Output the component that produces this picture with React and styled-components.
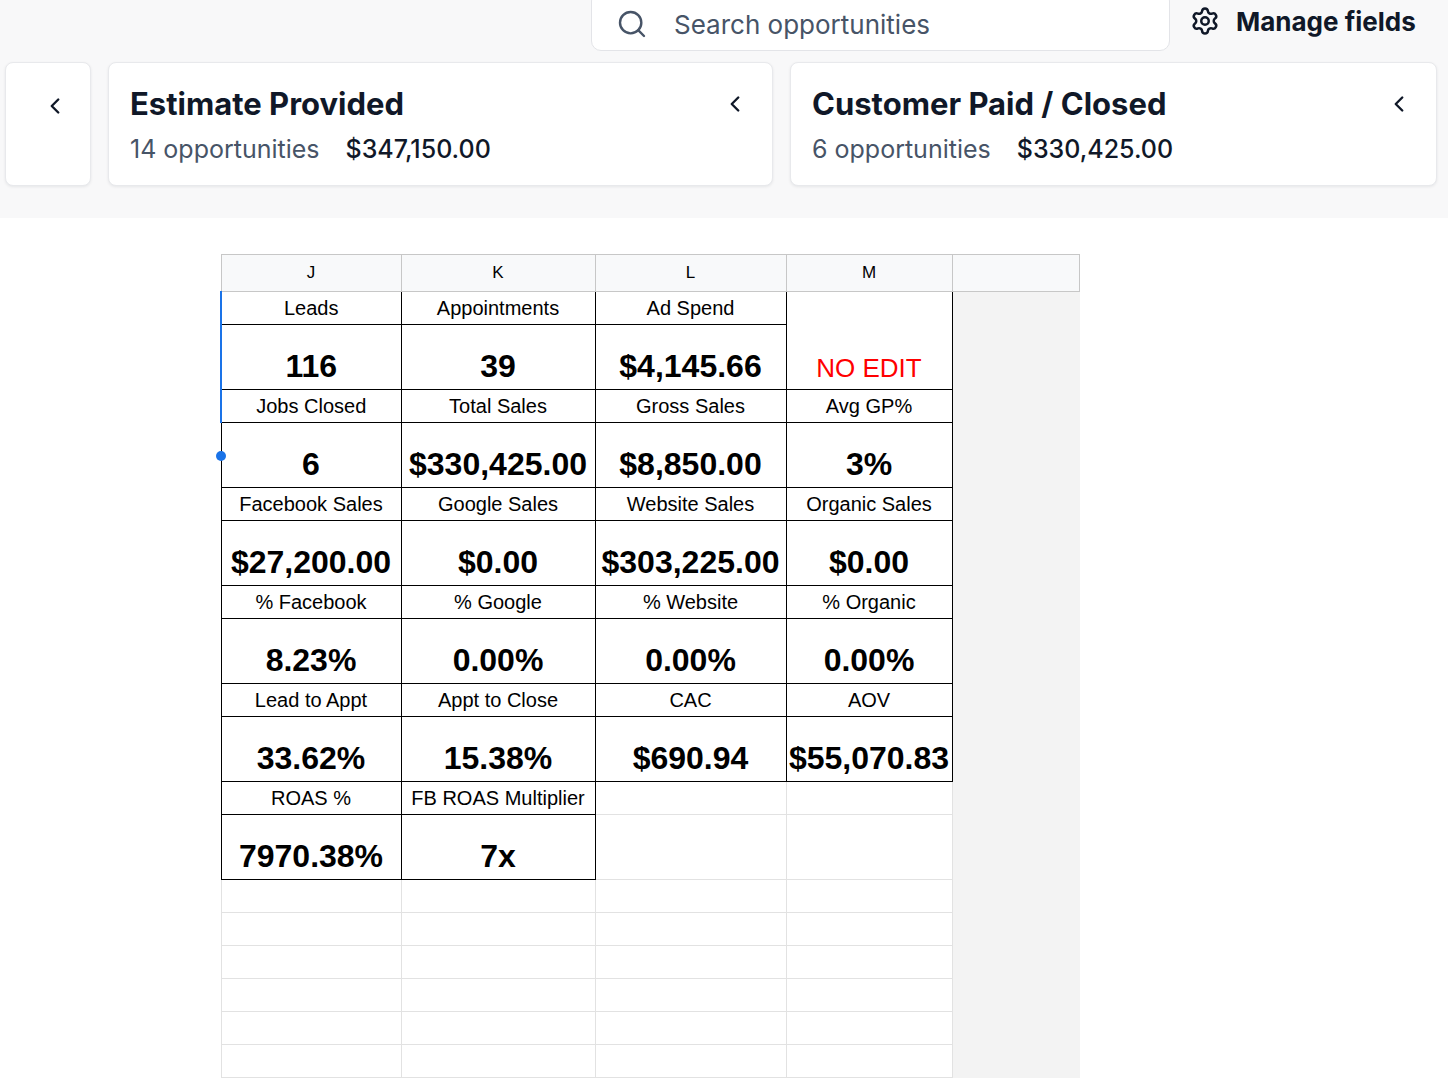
import React from 'react';
import styled, { createGlobalStyle } from 'styled-components';
import { Search, Settings, ChevronLeft } from 'lucide-react';

const Global = createGlobalStyle`
  body { margin: 0; background: #fff; font-family: Inter, "Noto Sans", sans-serif; }
`;

const Top = styled.div`
  background: #f8f8f9;
  height: 218px;
  box-sizing: border-box;
  overflow: hidden;
`;
const Toolbar = styled.div`
  display: flex;
  align-items: center;
  height: 54px;
  margin-top: -6px;
  padding-left: 591px;
  gap: 20px;
`;
const SearchBox = styled.div`
  width: 579px;
  height: 60px;
  box-sizing: border-box;
  border: 1px solid #e3e4e8;
  border-radius: 10px;
  background: #fff;
  display: flex;
  align-items: center;
  gap: 26px;
  padding: 6px 0 0 24px;
  color: #667085;
  font-size: 26px;
  color: #475467;
`;
const Manage = styled.div`
  display: flex;
  align-items: center;
  gap: 16px;
  font-size: 26px;
  font-weight: 700;
  color: #101828;
`;
const Cards = styled.div`
  display: flex;
  gap: 17px;
  padding: 14px 11px 0 5px;
`;
const Card = styled.div`
  width: ${p => p.w}px;
  height: 124px;
  box-sizing: border-box;
  background: #fff;
  border: 1px solid #e8e9ec;
  border-radius: 8px;
  box-shadow: 0 1px 3px rgba(16,24,40,0.08);
  display: flex;
  align-items: flex-start;
  padding: ${p => p.small ? '30px 0 0 36px' : '22px 24px 0 21px'};
`;
const CardBody = styled.div`
  flex: 1;
`;
const Title = styled.div`
  font-size: 31px;
  font-weight: 700;
  color: #101828;
  margin-bottom: 12px;
`;
const Meta = styled.div`
  display: flex;
  gap: 26px;
  font-size: 25px;
`;
const Count = styled.span` color: #475467; `;
const Amount = styled.span` color: #101828; font-weight: 500; `;

const Sheet = styled.table`
  border-collapse: collapse;
  margin: 36px 0 0 220px;
  font-family: "Liberation Sans", Arial, sans-serif;
  table-layout: fixed;
`;
const Cell = styled.td`
  box-sizing: border-box;
  padding: 0;
  text-align: center;
  color: #000;
  border: 1px solid ${p => (p.dark ? '#000' : '#e2e2e2')};
  height: ${p => (p.kind === 'value' ? 65 : p.kind === 'head' ? 37 : 33)}px;
  font-size: ${p => (p.kind === 'value' ? 32 : p.kind === 'head' ? 17 : 20)}px;
  font-weight: ${p => (p.kind === 'value' ? 700 : 400)};
  vertical-align: ${p => (p.kind === 'value' ? 'bottom' : 'middle')};
  padding-bottom: ${p => (p.kind === 'value' ? '4px' : 0)};
  background: ${p => (p.gray ? '#f3f3f3' : '#fff')};
  ${p => p.head && 'border-color: #c7c7c7; background: #f8f9fa;'}
  ${p => p.gray && 'border-color: #f3f3f3;'}
  ${p => p.sel && 'border-left: 2px solid #1a73e8;'}
  position: relative;
`;
const Red = styled.span` color: #ff0000; font-weight: 400; font-size: 26px; `;
const Dot = styled.span`
  position: absolute;
  left: -6px;
  bottom: -30px;
  width: 10px; height: 10px;
  border-radius: 50%;
  background: #1a73e8;
`;

const widths = [180, 194, 191, 166, 127];
const rows = [
  [['Leads', '116'], ['Appointments', '39'], ['Ad Spend', '$4,145.66'], null],
  [['Jobs Closed', '6'], ['Total Sales', '$330,425.00'], ['Gross Sales', '$8,850.00'], ['Avg GP%', '3%']],
  [['Facebook Sales', '$27,200.00'], ['Google Sales', '$0.00'], ['Website Sales', '$303,225.00'], ['Organic Sales', '$0.00']],
  [['% Facebook', '8.23%'], ['% Google', '0.00%'], ['% Website', '0.00%'], ['% Organic', '0.00%']],
  [['Lead to Appt', '33.62%'], ['Appt to Close', '15.38%'], ['CAC', '$690.94'], ['AOV', '$55,070.83']],
  [['ROAS %', '7970.38%'], ['FB ROAS Multiplier', '7x'], undefined, undefined],
];

export default function App() {
  return (
    <>
      <Global />
      <Top>
        <Toolbar>
          <SearchBox><Search size={32} strokeWidth={1.8} color="#475467" />Search opportunities</SearchBox>
          <Manage><Settings size={30} strokeWidth={2} />Manage fields</Manage>
        </Toolbar>
        <Cards>
          <Card w={86} small><ChevronLeft size={26} strokeWidth={2.2} color="#101828" /></Card>
          <Card w={665}>
            <CardBody>
              <Title>Estimate Provided</Title>
              <Meta><Count>14 opportunities</Count><Amount>$347,150.00</Amount></Meta>
            </CardBody>
            <ChevronLeft size={26} strokeWidth={2.2} color="#101828" style={{ marginTop: 6 }} />
          </Card>
          <Card w={647}>
            <CardBody>
              <Title>Customer Paid / Closed</Title>
              <Meta><Count>6 opportunities</Count><Amount>$330,425.00</Amount></Meta>
            </CardBody>
            <ChevronLeft size={26} strokeWidth={2.2} color="#101828" style={{ marginTop: 6 }} />
          </Card>
        </Cards>
      </Top>
      <Sheet>
        <colgroup>{widths.map((w, i) => <col key={i} style={{ width: w }} />)}</colgroup>
        <tbody>
          <tr>
            {['J', 'K', 'L', 'M', ''].map((h, i) => <Cell key={i} kind="head" head>{h}</Cell>)}
          </tr>
          {rows.map((r, ri) => (
            <React.Fragment key={ri}>
              <tr>
                {r.map((c, ci) =>
                  c === null ? (
                    <Cell key={ci} kind="value" dark rowSpan={2} style={{ height: 98 }}><Red>NO EDIT</Red></Cell>
                  ) : (
                    <Cell key={ci} kind="label" dark={!!c} sel={ci === 0 && ri < 2}>{c ? c[0] : ''}</Cell>
                  )
                )}
                <Cell gray kind="label" />
              </tr>
              <tr>
                {r.map((c, ci) =>
                  c === null ? null : (
                    <Cell key={ci} kind="value" dark={!!c} sel={ci === 0 && ri === 0}>
                      {c ? c[1] : ''}
                      {ci === 0 && ri === 1 && <Dot style={{ bottom: 'auto', top: 28 }} />}
                    </Cell>
                  )
                )}
                <Cell gray kind="value" />
              </tr>
            </React.Fragment>
          ))}
          {Array.from({ length: 6 }).map((_, i) => (
            <tr key={'e' + i}>
              {[0, 1, 2, 3].map(ci => <Cell key={ci} kind="label" />)}
              <Cell gray kind="label" />
            </tr>
          ))}
        </tbody>
      </Sheet>
    </>
  );
}
